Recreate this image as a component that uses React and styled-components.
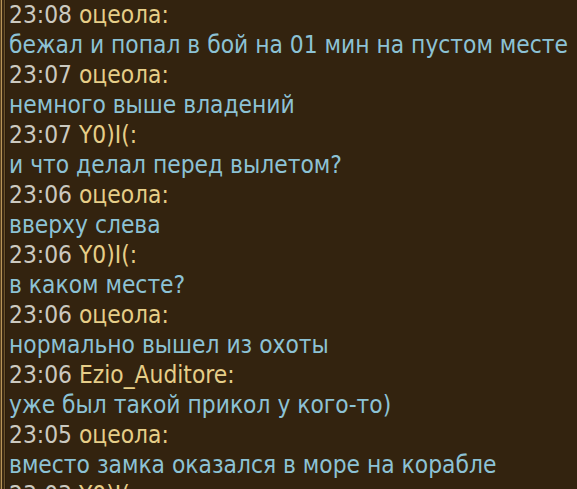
import React from "react";
import styled, { createGlobalStyle } from "styled-components";

const GlobalStyle = createGlobalStyle`
  html, body {
    margin: 0;
    padding: 0;
    background: #33230f;
    overflow: hidden;
  }
`;

const Frame = styled.div`
  display: flex;
  width: 577px;
  height: 489px;
  overflow: hidden;
  background: #33230f;
`;

// gold double line at the left edge of the chat panel
const Edge = styled.div`
  flex: 0 0 6px;
  background: linear-gradient(
    to right,
    #5b4320 0px, #5b4320 1px,
    #b8955a 1px, #b8955a 2px,
    #3a2913 2px, #3a2913 4px,
    #6e552c 4px, #6e552c 5px,
    #2a1c0b 5px, #2a1c0b 6px
  );
`;

const Log = styled.div`
  flex: 1;
  padding: 0 0 0 3px;
  font-family: "DejaVu Sans Condensed", "DejaVu Sans", sans-serif;
  font-stretch: condensed;
  font-size: 24.3px;
  line-height: 30px;
  white-space: nowrap;
`;

const Head = styled.div`
  color: #cbc9c0;
`;

const Nick = styled.span`
  color: #e6ce88;
`;

const Text = styled.div`
  color: #8cc2d5;
`;

const messages = [
  { time: "23:08", nick: "оцеола", text: "бежал и попал в бой на 01 мин на пустом месте" },
  { time: "23:07", nick: "оцеола", text: "немного выше владений" },
  { time: "23:07", nick: "Y0)I(", text: "и что делал перед вылетом?" },
  { time: "23:06", nick: "оцеола", text: "вверху слева" },
  { time: "23:06", nick: "Y0)I(", text: "в каком месте?" },
  { time: "23:06", nick: "оцеола", text: "нормально вышел из охоты" },
  { time: "23:06", nick: "Ezio_Auditore", text: "уже был такой прикол у кого-то)" },
  { time: "23:05", nick: "оцеола", text: "вместо замка оказался в море на корабле" },
  { time: "23:03", nick: "Y0)I(", text: "" },
];

export default function App() {
  return (
    <Frame>
      <GlobalStyle />
      <Edge />
      <Log>
        {messages.map((m, i) => (
          <React.Fragment key={i}>
            <Head>
              {m.time} <Nick>{m.nick}:</Nick>
            </Head>
            {m.text && <Text>{m.text}</Text>}
          </React.Fragment>
        ))}
      </Log>
    </Frame>
  );
}
